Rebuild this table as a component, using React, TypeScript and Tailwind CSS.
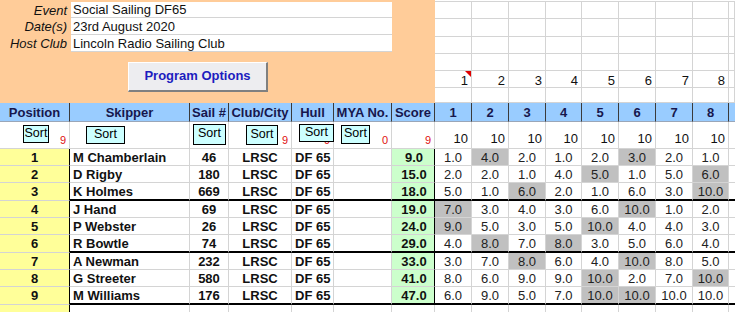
import React from "react";

const COLS =
  "grid-cols-[70px_120px_39px_63px_42px_58px_43px_37px_37px_37px_36px_37px_37px_37px_36px_6px]";
const RCOLS = "grid-cols-[37px_37px_37px_36px_37px_37px_37px_36px_6px]";

type Result = {
  pos: number;
  name: string;
  sail: string;
  score: string;
  r: string[];
  g: number[];
};

const results: Result[] = [
  { pos: 1, name: "M Chamberlain", sail: "46", score: "9.0", r: ["1.0", "4.0", "2.0", "1.0", "2.0", "3.0", "2.0", "1.0"], g: [1, 5] },
  { pos: 2, name: "D Rigby", sail: "180", score: "15.0", r: ["2.0", "2.0", "1.0", "4.0", "5.0", "1.0", "5.0", "6.0"], g: [4, 7] },
  { pos: 3, name: "K Holmes", sail: "669", score: "18.0", r: ["5.0", "1.0", "6.0", "2.0", "1.0", "6.0", "3.0", "10.0"], g: [2, 7] },
  { pos: 4, name: "J Hand", sail: "69", score: "19.0", r: ["7.0", "3.0", "4.0", "3.0", "6.0", "10.0", "1.0", "2.0"], g: [0, 5] },
  { pos: 5, name: "P Webster", sail: "26", score: "24.0", r: ["9.0", "5.0", "3.0", "5.0", "10.0", "4.0", "4.0", "3.0"], g: [0, 4] },
  { pos: 6, name: "R Bowtle", sail: "74", score: "29.0", r: ["4.0", "8.0", "7.0", "8.0", "3.0", "5.0", "6.0", "4.0"], g: [1, 3] },
  { pos: 7, name: "A Newman", sail: "232", score: "33.0", r: ["3.0", "7.0", "8.0", "6.0", "4.0", "10.0", "8.0", "5.0"], g: [2, 5] },
  { pos: 8, name: "G Streeter", sail: "580", score: "41.0", r: ["8.0", "6.0", "9.0", "9.0", "10.0", "2.0", "7.0", "10.0"], g: [4, 7] },
  { pos: 9, name: "M Williams", sail: "176", score: "47.0", r: ["6.0", "9.0", "5.0", "7.0", "10.0", "10.0", "10.0", "10.0"], g: [4, 5] },
];

const races = [1, 2, 3, 4, 5, 6, 7, 8];

function SortBtn({ className }: { className: string }) {
  return (
    <div
      className={`absolute z-10 flex items-center justify-center border border-black bg-[#ccffff] pb-[2px] text-[12.5px] leading-none text-black ${className}`}
    >
      Sort
    </div>
  );
}

function Red({ n }: { n: string }) {
  return <span className="absolute bottom-[2px] right-[3px] text-[11px] leading-none text-[#e01010]">{n}</span>;
}

export default function App() {
  return (
    <div className="h-[312px] w-[735px] overflow-hidden bg-white font-['Liberation_Sans',Arial,sans-serif] text-[13px] text-[#111]">
      {/* event info + race numbers */}
      <div className="flex h-[103px]">
        <div className="w-[435px] shrink-0 bg-[#ffcc99] pt-[2px]">
          {[
            ["Event", "Social Sailing DF65", "h-[16px]"],
            ["Date(s)", "23rd August 2020", "h-[17px]"],
            ["Host Club", "Lincoln Radio Sailing Club", "h-[17px]"],
          ].map(([label, value, h]) => (
            <div key={label} className={`flex ${h}`}>
              <div className="flex w-[71px] items-center justify-end pr-[4px] italic leading-none">{label}</div>
              <div className="flex w-[321px] items-center border-b border-[#d4d4d4] bg-white pl-[2px] leading-none">
                {value}
              </div>
            </div>
          ))}
          <div className="ml-[128px] mt-[10px] flex h-[30px] w-[140px] items-center justify-center border-b-2 border-l border-r-2 border-t border-b-[#808080] border-l-white border-r-[#808080] border-t-white bg-[#ededf0] pb-[1px] font-bold text-[#1d1dbf]">
            Program Options
          </div>
        </div>
        <div className="flex-1">
          <div className="h-[2px] border-b border-[#d4d4d4]" />
          {["h-[17px]", "h-[18px]", "h-[17px]", "h-[17px]", "h-[17px]", "h-[15px]"].map((h, ri) => (
            <div key={ri} className={`grid ${RCOLS} ${h}`}>
              {[...races, 0].map((n) => (
                <div
                  key={n}
                  className="relative flex items-center justify-end border-b border-r border-[#d4d4d4] pr-[3px] pt-[2px] leading-none"
                >
                  {ri === 4 && n > 0 ? n : ""}
                  {ri === 4 && n === 1 && (
                    <svg className="absolute right-0 top-0" width="6" height="6" viewBox="0 0 6 6">
                      <polygon points="0,0 6,0 6,6" fill="#e00000" />
                    </svg>
                  )}
                </div>
              ))}
            </div>
          ))}
        </div>
      </div>

      {/* header row */}
      <div className={`grid ${COLS} h-[19px] bg-[#99ccff] font-bold text-[#17174d]`}>
        {["Position", "Skipper", "Sail #", "Club/City", "Hull", "MYA No.", "Score"].map((t) => (
          <div key={t} className="flex items-center justify-center border-b border-r border-b-[#9aa6b8] border-r-[#3a3a3a] leading-none">
            {t}
          </div>
        ))}
        {races.map((n) => (
          <div key={n} className="flex items-center justify-center border-b border-r border-b-[#9aa6b8] border-r-[#3a3a3a] leading-none">
            {n}
          </div>
        ))}
        <div className="border-b border-[#9aa6b8]" />
      </div>

      {/* sort row */}
      <div className={`grid ${COLS} h-[27px]`}>
        <div className="relative border-b border-r border-b-[#d4d4d4] border-r-[#d4d4d4]">
          <SortBtn className="left-[23px] top-[3px] h-[18px] w-[26px]" />
          <Red n="9" />
        </div>
        <div className="relative border-b border-r border-[#d4d4d4]">
          <SortBtn className="left-[16px] top-[4px] h-[18px] w-[39px]" />
        </div>
        <div className="relative border-b border-r border-[#d4d4d4]">
          <SortBtn className="left-[3px] top-[2px] h-[21px] w-[33px]" />
        </div>
        <div className="relative border-b border-r border-[#d4d4d4]">
          <SortBtn className="left-[17px] top-[3px] h-[20px] w-[32px]" />
          <Red n="9" />
        </div>
        <div className="relative border-b border-r border-[#d4d4d4]">
          <SortBtn className="left-[7px] top-[2px] h-[18px] w-[35px]" />
          <Red n="9" />
        </div>
        <div className="relative border-b border-r border-[#d4d4d4]">
          <SortBtn className="left-[7px] top-[3px] h-[19px] w-[29px]" />
          <Red n="0" />
        </div>
        <div className="relative border-b border-r border-[#d4d4d4]">
          <Red n="9" />
        </div>
        {races.map((n) => (
          <div key={n} className="flex items-end justify-end border-b border-r border-[#d4d4d4] pb-[3px] pr-[3px] leading-none">
            10
          </div>
        ))}
        <div className="border-b border-[#d4d4d4]" />
      </div>

      {/* results */}
      {results.map((row) => {
        const thick = row.pos % 3 === 0;
        const h = thick ? "h-[18px]" : "h-[17px]";
        const b = thick ? "border-b-2 border-b-black" : "border-b border-b-[#d4d4d4]";
        return (
          <div key={row.pos} className={`grid ${COLS} ${h} leading-none`}>
            <div className="flex items-center justify-center border-b border-r border-b-[#d4d4d4] border-r-black bg-[#ffff99] font-bold">
              {row.pos}
            </div>
            <div className={`flex items-center border-r border-r-[#d4d4d4] pl-[3px] font-bold ${b}`}>{row.name}</div>
            <div className={`flex items-center justify-center border-r border-r-[#d4d4d4] font-bold ${b}`}>{row.sail}</div>
            <div className={`flex items-center justify-center border-r border-r-[#d4d4d4] font-bold ${b}`}>LRSC</div>
            <div className={`flex items-center border-r border-r-[#d4d4d4] pl-[3px] font-bold ${b}`}>DF 65</div>
            <div className={`border-r border-r-[#d4d4d4] ${b}`} />
            <div className={`flex items-center justify-center border-r border-r-black bg-[#ccffcc] pl-[2px] font-bold ${b}`}>
              {row.score}
            </div>
            {row.r.map((v, i) => (
              <div
                key={i}
                className={`flex items-center justify-center border-r border-r-[#d4d4d4] text-[#222] ${b} ${
                  row.g.includes(i) ? "bg-[#c0c0c0]" : ""
                }`}
              >
                {v}
              </div>
            ))}
            <div className={b} />
          </div>
        );
      })}

      {/* partial row at bottom */}
      <div className={`grid ${COLS} h-[10px]`}>
        <div className="border-r border-r-black bg-[#ffff99]" />
        {[...Array(14)].map((_, i) => (
          <div key={i} className="border-r border-[#d4d4d4]" />
        ))}
        <div />
      </div>
    </div>
  );
}
